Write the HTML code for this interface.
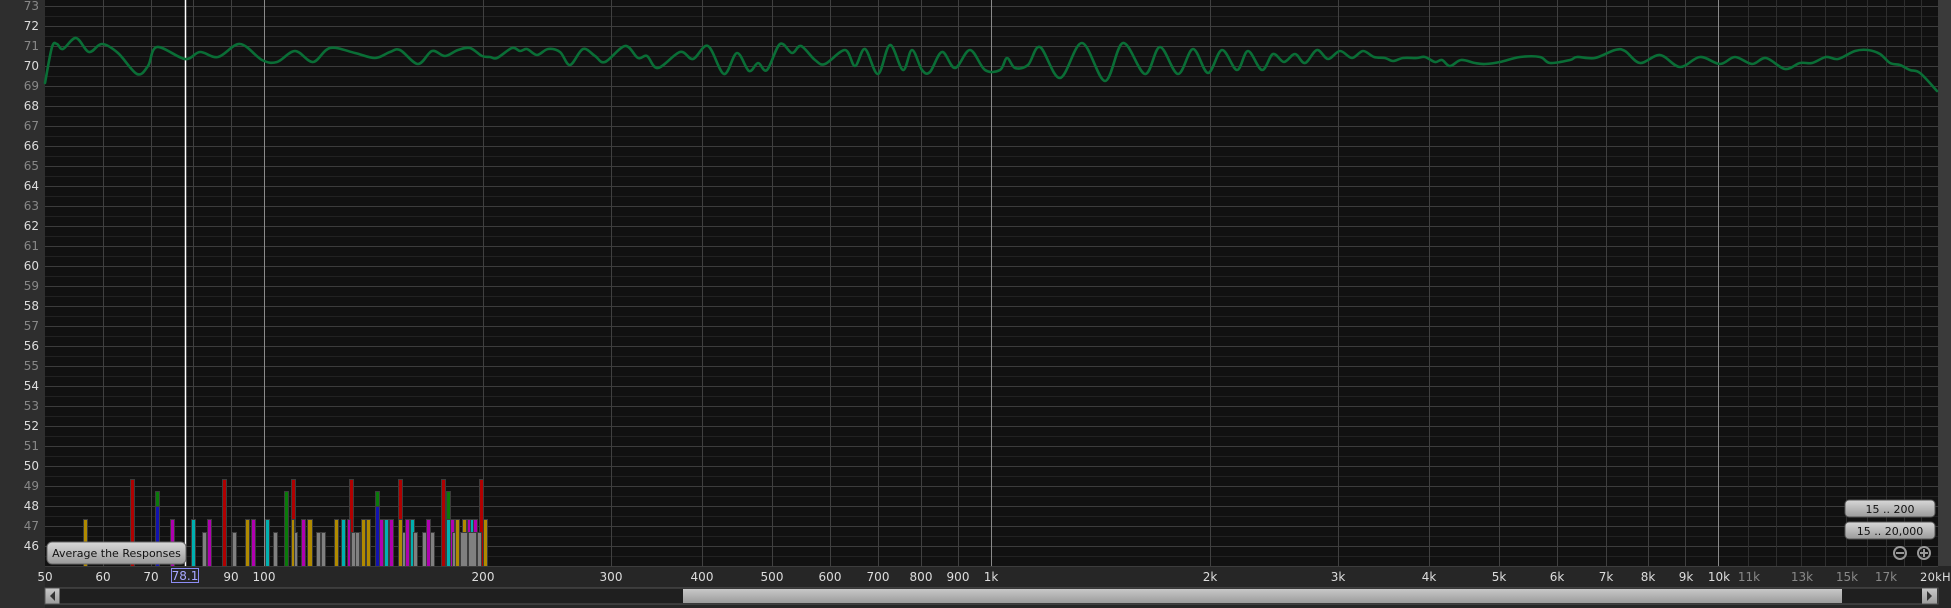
<!DOCTYPE html>
<html><head><meta charset="utf-8"><style>
html,body{margin:0;padding:0;background:#262626;width:1951px;height:608px;overflow:hidden}
svg{display:block}
text{font-family:"DejaVu Sans","Liberation Sans",sans-serif}
</style></head><body>
<svg id="s" width="1951" height="608" viewBox="0 0 1951 608" xmlns="http://www.w3.org/2000/svg">
<defs>
<linearGradient id="btn" x1="0" y1="0" x2="0" y2="1"><stop offset="0" stop-color="#d8d8d8"/><stop offset="1" stop-color="#9a9a9a"/></linearGradient>
<linearGradient id="thumb" x1="0" y1="0" x2="0" y2="1"><stop offset="0" stop-color="#c8c8c8"/><stop offset="1" stop-color="#9c9c9c"/></linearGradient>
</defs>
<rect x="0" y="0" width="45" height="608" fill="#2e2e2e"/>
<rect x="1938" y="0" width="13" height="566" fill="#3a3a3a"/>
<rect x="45" y="0" width="1893" height="566" fill="#111111"/>
<g id="grid"></g>
<line x1="185.5" y1="0" x2="185.5" y2="566" stroke="#ffffff" stroke-width="1.5"/>
<g id="bars" stroke="#3c3c3c" stroke-width="1"></g>
<path id="curve" fill="none" stroke="#0a6e36" stroke-width="2.6" stroke-linejoin="round" stroke-linecap="round"/>
<g font-size="12" text-anchor="end">
<text x="39" y="10" fill="#888">73</text>
<text x="39" y="30" fill="#ddd">72</text>
<text x="39" y="50" fill="#888">71</text>
<text x="39" y="70" fill="#ddd">70</text>
<text x="39" y="90" fill="#888">69</text>
<text x="39" y="110" fill="#ddd">68</text>
<text x="39" y="130" fill="#888">67</text>
<text x="39" y="150" fill="#ddd">66</text>
<text x="39" y="170" fill="#888">65</text>
<text x="39" y="190" fill="#ddd">64</text>
<text x="39" y="210" fill="#888">63</text>
<text x="39" y="230" fill="#ddd">62</text>
<text x="39" y="250" fill="#888">61</text>
<text x="39" y="270" fill="#ddd">60</text>
<text x="39" y="290" fill="#888">59</text>
<text x="39" y="310" fill="#ddd">58</text>
<text x="39" y="330" fill="#888">57</text>
<text x="39" y="350" fill="#ddd">56</text>
<text x="39" y="370" fill="#888">55</text>
<text x="39" y="390" fill="#ddd">54</text>
<text x="39" y="410" fill="#888">53</text>
<text x="39" y="430" fill="#ddd">52</text>
<text x="39" y="450" fill="#888">51</text>
<text x="39" y="470" fill="#ddd">50</text>
<text x="39" y="490" fill="#888">49</text>
<text x="39" y="510" fill="#ddd">48</text>
<text x="39" y="530" fill="#888">47</text>
<text x="39" y="550" fill="#ddd">46</text>
</g>
<g font-size="12" text-anchor="middle" fill="#ddd">
<text x="45" y="581">50</text>
<text x="103" y="581">60</text>
<text x="151" y="581">70</text>
<text x="231" y="581">90</text>
<text x="264" y="581">100</text>
<text x="483" y="581">200</text>
<text x="611" y="581">300</text>
<text x="702" y="581">400</text>
<text x="772" y="581">500</text>
<text x="830" y="581">600</text>
<text x="878" y="581">700</text>
<text x="921" y="581">800</text>
<text x="958" y="581">900</text>
<text x="991" y="581">1k</text>
<text x="1210" y="581">2k</text>
<text x="1338" y="581">3k</text>
<text x="1429" y="581">4k</text>
<text x="1499" y="581">5k</text>
<text x="1557" y="581">6k</text>
<text x="1606" y="581">7k</text>
<text x="1648" y="581">8k</text>
<text x="1686" y="581">9k</text>
<text x="1719" y="581">10k</text>
<text x="1749" y="581" fill="#888">11k</text>
<text x="1802" y="581" fill="#888">13k</text>
<text x="1847" y="581" fill="#888">15k</text>
<text x="1886" y="581" fill="#888">17k</text>
<text x="1920" y="581" text-anchor="start" font-size="11.5" textLength="37">20kHz</text>
</g>
<rect x="171.5" y="568.5" width="27" height="14" fill="#262626" stroke="#8d8df5" stroke-width="1"/>
<text x="185" y="580" font-size="12" fill="#a8a8ff" text-anchor="middle">78.1</text>
<rect x="47" y="542" width="139" height="22" rx="5" fill="url(#btn)" stroke="#666"/>
<text x="116.5" y="557" font-size="11" fill="#111" text-anchor="middle">Average the Responses</text>
<rect x="1845" y="500" width="90" height="17" rx="4" fill="url(#btn)" stroke="#555"/>
<text x="1890" y="513" font-size="11" fill="#111" text-anchor="middle">15 .. 200</text>
<rect x="1845" y="522" width="90" height="17" rx="4" fill="url(#btn)" stroke="#555"/>
<text x="1890" y="535" font-size="11" fill="#111" text-anchor="middle">15 .. 20,000</text>
<g stroke="#999" stroke-width="2" fill="none">
<circle cx="1900" cy="553" r="6"/><line x1="1896" y1="553" x2="1904" y2="553"/>
<circle cx="1924" cy="553" r="6"/><line x1="1920" y1="553" x2="1928" y2="553"/><line x1="1924" y1="549" x2="1924" y2="557"/>
</g>
<rect x="45" y="588" width="1893" height="16" fill="#1f1f1f" stroke="#555" stroke-width="1"/>
<rect x="45.5" y="588.5" width="14" height="15" fill="url(#thumb)"/>
<path d="M55 591 L50 596 L55 601 Z" fill="#333"/>
<rect x="683" y="589" width="1159" height="14" fill="url(#thumb)"/>
<rect x="1922" y="588.5" width="15" height="15" fill="url(#thumb)"/>
<path d="M1927 591 L1932 596 L1927 601 Z" fill="#333"/>
</svg>
<script>
(function(){
var NS="http://www.w3.org/2000/svg";
function X(f){return 45+218.9*Math.log2(f/50);}
var g=document.getElementById('grid');
function ln(x1,y1,x2,y2,c,w){var l=document.createElementNS(NS,'line');l.setAttribute('x1',x1);l.setAttribute('y1',y1);l.setAttribute('x2',x2);l.setAttribute('y2',y2);l.setAttribute('stroke',c);l.setAttribute('stroke-width',w||1);g.appendChild(l);}
for(var i=0;i<=56;i++){var y=6+i*10+0.5;ln(45,y,1938,y,i%2==0?'#3c3c3c':'#222222');}
var fs=[60,70,80,90,200,300,400,500,600,700,800,900,2000,3000,4000,5000,6000,7000,8000,9000,11000,12000,13000,14000,15000,16000,17000,18000,19000];
fs.forEach(function(f){var x=Math.round(X(f))+0.5;ln(x,0,x,566,f>10000?'#2e2e2e':'#404040');});
[100,1000,10000].forEach(function(f){var x=Math.round(X(f))+0.5;ln(x,0,x,566,'#8a8a8a');});
var C={r:'#b00000',g:'#0a7a0a',b:'#1212b0',m:'#b000b0',c:'#00b0b0',y:'#b08a00',k:'#808080'};
var T={4:479,3:491,2:506,1:519,0:532};
var B=[[83,4,'y',1],[130,4,'r',4],[155,4,'g',3],[155,4,'b',2],[170,4,'m',1],[191,4,'c',1],[202,4,'k',0],[207,4,'m',1],[222,4,'r',4],[232,4,'k',0],[245,4,'y',1],[251,4,'m',1],[265,4,'c',1],[273,4,'k',0],[284,4,'g',3],[291,4,'r',4],[291,3,'y',1],[294,3,'k',0],[301,4,'m',1],[307,5,'y',1],[316,4,'k',0],[321,4,'k',0],[334,4,'y',1],[341,4,'c',1],[349,4,'r',4],[347,3,'m',1],[351,4,'k',0],[355,4,'k',0],[360,4,'k',0],[361,4,'y',1],[366,4,'y',1],[375,4,'g',3],[375,4,'b',2],[379,4,'m',1],[384,4,'c',1],[388,5,'k',0],[389,4,'m',1],[398,4,'r',4],[398,4,'y',1],[402,5,'k',0],[405,4,'m',1],[410,4,'c',1],[413,4,'k',0],[422,5,'k',0],[426,4,'m',1],[430,4,'k',0],[441,4,'r',4],[446,4,'g',3],[446,4,'c',1],[450,4,'m',1],[452,6,'k',0],[455,4,'y',1],[462,4,'y',1],[460,8,'k',0],[467,3,'m',1],[470,3,'c',1],[473,4,'m',1],[468,8,'k',0],[479,4,'r',4],[483,4,'y',1],[477,4,'k',0]];
var bg=document.getElementById('bars');
B.forEach(function(b){var r=document.createElementNS(NS,'rect');r.setAttribute('x',b[0]+0.5);r.setAttribute('y',T[b[3]]+0.5);r.setAttribute('width',b[1]);r.setAttribute('height',566-T[b[3]]);r.setAttribute('fill',C[b[2]]);bg.appendChild(r);});
var P=[[45,83],[52,47],[57,44],[63,49],[76,38],[89,52],[102,44],[118,53],[137,74],[148,66],[157,47],[185,59],[200,52],[218,57],[240,44],[262,60],[277,62],[295,51],[313,62],[330,48],[355,53],[375,58],[390,52],[400,50],[418,64],[432,51],[445,56],[458,50],[470,48],[482,56],[490,57],[497,58],[512,48],[520,51],[527,49],[537,55],[548,49],[560,52],[570,65],[583,49],[595,56],[605,62],[625,46],[638,58],[647,56],[658,68],[680,52],[693,59],[708,46],[724,74],[737,53],[749,71],[758,63],[767,70],[780,44],[792,53],[801,46],[815,60],[825,64],[845,50],[855,66],[865,49],[878,74],[890,45],[903,70],[912,50],[922,70],[930,72],[942,52],[955,68],[970,50],[985,70],[1000,70],[1007,58],[1015,68],[1028,65],[1040,47],[1060,78],[1082,43],[1105,81],[1123,43],[1145,74],[1160,47],[1178,74],[1193,49],[1208,73],[1222,50],[1237,70],[1248,51],[1262,70],[1273,54],[1284,62],[1295,54],[1305,63],[1317,50],[1328,59],[1340,51],[1352,58],[1363,51],[1374,57],[1385,58],[1393,61],[1403,58],[1417,58],[1425,57],[1435,62],[1442,60],[1450,66],[1461,60],[1475,63],[1485,64],[1500,62],[1520,57],[1540,57],[1550,63],[1570,60],[1577,57],[1595,58],[1615,50],[1625,51],[1640,63],[1660,55],[1680,67],[1700,57],[1720,64],[1735,57],[1752,64],[1766,58],[1785,69],[1800,63],[1812,63],[1826,57],[1838,59],[1855,51],[1868,50],[1880,54],[1890,63],[1900,65],[1910,70],[1920,73],[1937,91]];
var d='M'+P[0][0]+' '+P[0][1];
for(var i=0;i<P.length-1;i++){var p0=P[i>0?i-1:0],p1=P[i],p2=P[i+1],p3=P[i+2<P.length?i+2:i+1];
var c1x=p1[0]+(p2[0]-p0[0])/6,c1y=p1[1]+(p2[1]-p0[1])/6,c2x=p2[0]-(p3[0]-p1[0])/6,c2y=p2[1]-(p3[1]-p1[1])/6;
d+=' C'+c1x.toFixed(1)+' '+c1y.toFixed(1)+' '+c2x.toFixed(1)+' '+c2y.toFixed(1)+' '+p2[0]+' '+p2[1];}
document.getElementById('curve').setAttribute('d',d);
})();
</script>
</body></html>
